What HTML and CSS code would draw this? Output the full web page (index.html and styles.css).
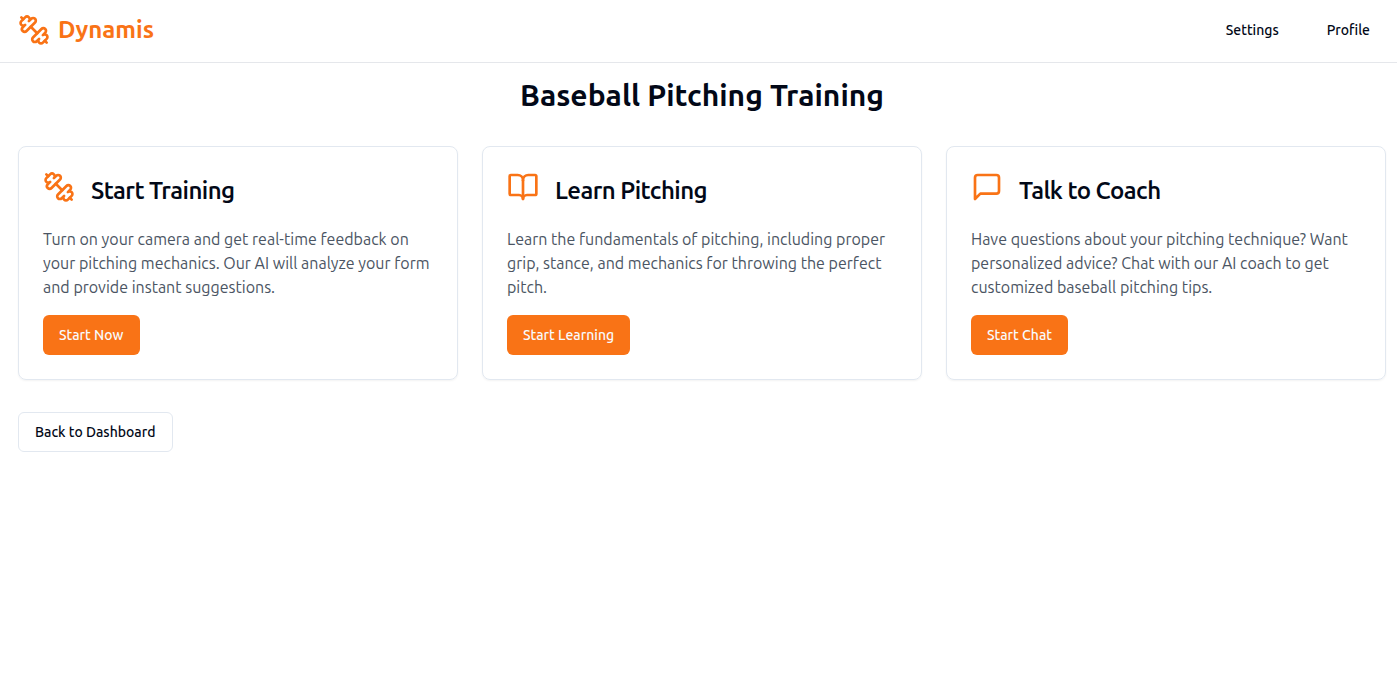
FILE: index.html
```html
<!DOCTYPE html>
<html lang="en">
<head>
<meta charset="utf-8">
<title>Dynamis</title>
<link rel="stylesheet" href="styles.css">
</head>
<body>
<header class="topbar">
  <div class="wrap topbar-inner">
    <a class="brand" href="#">
      <svg class="icon" viewBox="0 0 24 24"><path d="M14.4 14.4 9.6 9.6"/><path d="M18.657 21.485a2 2 0 1 1-2.829-2.828l-1.767 1.768a2 2 0 1 1-2.829-2.829l6.364-6.364a2 2 0 1 1 2.829 2.829l-1.768 1.767a2 2 0 1 1 2.828 2.829z"/><path d="m21.5 21.5-1.4-1.4"/><path d="M3.9 3.9 2.5 2.5"/><path d="M6.404 12.768a2 2 0 1 1-2.829-2.829l1.768-1.767a2 2 0 1 1-2.828-2.829l2.828-2.828a2 2 0 1 1 2.829 2.828l1.767-1.768a2 2 0 1 1 2.829 2.829z"/></svg>
      <span>Dynamis</span>
    </a>
    <nav class="nav">
      <a class="nav-link" href="#">Settings</a>
      <a class="nav-link" href="#">Profile</a>
    </nav>
  </div>
</header>
<main class="wrap">
  <h1 class="title">Baseball Pitching Training</h1>
  <section class="cards">
    <article class="card">
      <div class="card-head">
        <svg class="icon" viewBox="0 0 24 24"><path d="M14.4 14.4 9.6 9.6"/><path d="M18.657 21.485a2 2 0 1 1-2.829-2.828l-1.767 1.768a2 2 0 1 1-2.829-2.829l6.364-6.364a2 2 0 1 1 2.829 2.829l-1.768 1.767a2 2 0 1 1 2.828 2.829z"/><path d="m21.5 21.5-1.4-1.4"/><path d="M3.9 3.9 2.5 2.5"/><path d="M6.404 12.768a2 2 0 1 1-2.829-2.829l1.768-1.767a2 2 0 1 1-2.828-2.829l2.828-2.828a2 2 0 1 1 2.829 2.828l1.767-1.768a2 2 0 1 1 2.829 2.829z"/></svg>
        <h2 class="card-title">Start Training</h2>
      </div>
      <p class="card-text">Turn on your camera and get real-time feedback on your pitching mechanics. Our AI will analyze your form and provide instant suggestions.</p>
      <a class="btn btn-primary" href="#">Start Now</a>
    </article>
    <article class="card">
      <div class="card-head">
        <svg class="icon" viewBox="0 0 24 24"><path d="M12 7v14"/><path d="M3 18a1 1 0 0 1-1-1V4a1 1 0 0 1 1-1h5a4 4 0 0 1 4 4 4 4 0 0 1 4-4h5a1 1 0 0 1 1 1v13a1 1 0 0 1-1 1h-6a3 3 0 0 0-3 3 3 3 0 0 0-3-3z"/></svg>
        <h2 class="card-title">Learn Pitching</h2>
      </div>
      <p class="card-text">Learn the fundamentals of pitching, including proper grip, stance, and mechanics for throwing the perfect pitch.</p>
      <a class="btn btn-primary" href="#">Start Learning</a>
    </article>
    <article class="card">
      <div class="card-head">
        <svg class="icon" viewBox="0 0 24 24"><path d="M21 15a2 2 0 0 1-2 2H7l-4 4V5a2 2 0 0 1 2-2h14a2 2 0 0 1 2 2z"/></svg>
        <h2 class="card-title">Talk to Coach</h2>
      </div>
      <p class="card-text">Have questions about your pitching technique? Want personalized advice? Chat with our AI coach to get customized baseball pitching tips.</p>
      <a class="btn btn-primary" href="#">Start Chat</a>
    </article>
  </section>
  <a class="btn btn-outline" href="#">Back to Dashboard</a>
</main>
</body>
</html>
```
FILE: styles.css
```css
* { box-sizing: border-box; }
html, body { margin: 0; padding: 0; }
body {
  background: #fff;
  color: #020817;
  font-family: "Ubuntu", "Noto Sans", sans-serif;
  font-size: 16px;
  line-height: 24px;
}
a { color: inherit; text-decoration: none; }
.wrap { width: 1368px; margin-left: 18px; }
.topbar { height: 63px; border-bottom: 1px solid #e5e7eb; }
.topbar-inner { display: flex; align-items: center; justify-content: space-between; height: 60px; }
.brand { display: flex; align-items: center; gap: 8px; color: #f97316; font-size: 24px; font-weight: 700; line-height: 32px; }
.icon { width: 32px; height: 32px; flex: none; fill: none; stroke: #f97316; stroke-width: 2; stroke-linecap: round; stroke-linejoin: round; }
.nav { display: flex; gap: 16px; }
.nav-link { padding: 8px 16px; font-size: 14px; font-weight: 500; line-height: 20px; }
.title { margin: 14px 0 33px; font-size: 30px; font-weight: 700; line-height: 36px; text-align: center; }
.cards { display: grid; grid-template-columns: repeat(3, 440px); gap: 24px; margin-bottom: 32px; }
.card { border: 1px solid #e2e8f0; border-radius: 8px; padding: 24px; box-shadow: 0 1px 2px rgba(0,0,0,.05); }
.card-head { display: flex; align-items: flex-start; gap: 16px; height: 40px; margin-bottom: 16px; }
.card-title { margin: 0; padding-top: 4px; font-family: "Ubuntu Sans", "Ubuntu", sans-serif; font-size: 24px; font-weight: 600; letter-spacing: -0.55px; line-height: 32px; }
.card-text { margin: 0 0 16px; color: #4b5563; }
.btn { display: inline-flex; align-items: center; justify-content: center; height: 40px; padding: 0 16.2px 0 16px; border-radius: 6px; font-size: 14px; font-weight: 500; line-height: 20px; }
.btn-primary { background: #f97316; color: #f8fafc; }
.btn-outline { border: 1px solid #e2e8f0; background: #fff; }
```
